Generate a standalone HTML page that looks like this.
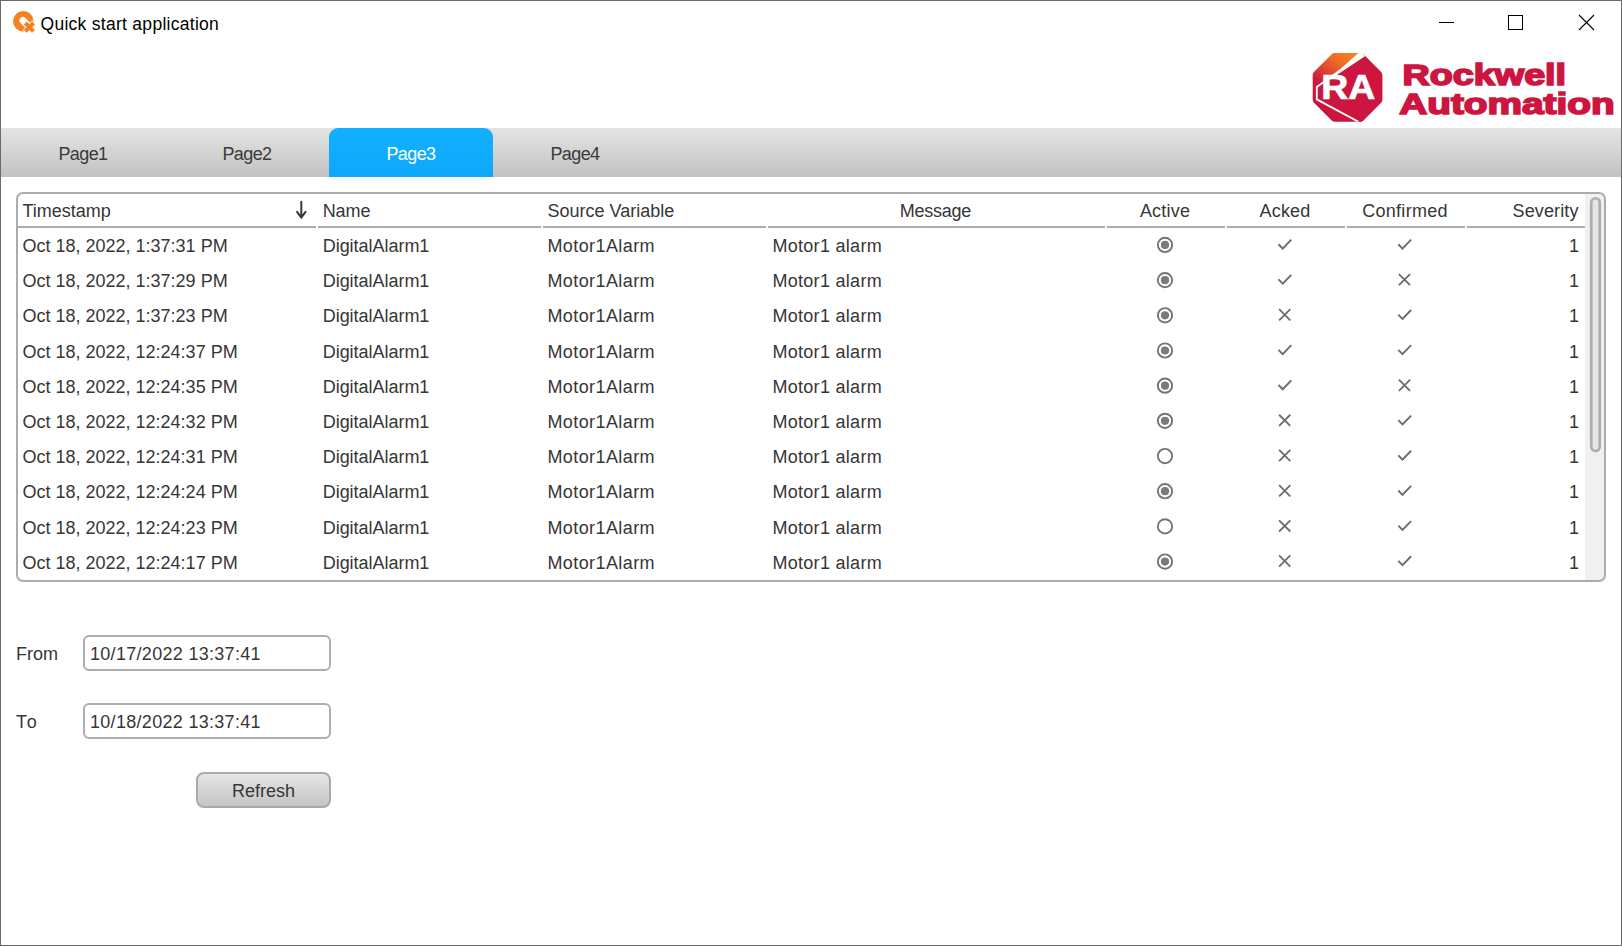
<!DOCTYPE html>
<html lang="en"><head><meta charset="utf-8"><title>Quick start application</title>
<style>
html,body{margin:0;padding:0}
body{width:1622px;height:946px;position:relative;overflow:hidden;background:#fff;font-family:"Liberation Sans",sans-serif;color:#363636;font-size:18px}
#winborder{position:absolute;left:0;top:0;width:1620px;height:944px;border:1px solid #6b6b6b;pointer-events:none}
#title{position:absolute;left:40.5px;top:13px;font-size:17.5px;letter-spacing:.28px;line-height:22px;color:#000;white-space:nowrap}
#appicon{position:absolute;left:0;top:0}
#winctl{position:absolute;left:1430px;top:5px}
#logo{position:absolute;left:1300px;top:44px}
#tabbar{position:absolute;left:1px;top:128px;width:1620px;height:49px;background:linear-gradient(#e4e4e4,#c2c2c2)}
.tab{position:absolute;top:0;height:49px;width:164px;text-align:center;line-height:52px;font-size:18px;color:#3a3a3a;letter-spacing:-.6px}
.tab.act{background:linear-gradient(#12b0ff,#0ea8fb);color:#fff;border-radius:9px 9px 0 0}
#table{position:absolute;left:0;top:0}
#tborder{position:absolute;left:16px;top:192px;width:1586px;height:386px;border:2px solid #acacac;border-radius:7px;pointer-events:none}
.h{position:absolute;top:200px;line-height:22px;white-space:nowrap}
.hc{text-align:center}
.hr{text-align:right}
.sep{position:absolute;top:226px;height:2px;background:#acacac}
#sortarrow{position:absolute;left:294px;top:199px}
.row{position:absolute;left:0;width:1600px;height:24px}
.c{position:absolute;top:0;line-height:24px;white-space:nowrap}
.c1{left:22.5px}.c2{left:322.7px;letter-spacing:-.03px}.c3{left:547.4px;letter-spacing:.42px}.c4{left:772.4px;letter-spacing:.3px}.c8{left:1467px;width:112px;text-align:right}
.ic{position:absolute}
#track{position:absolute;left:1585px;top:194px;width:19px;height:386px;background:#f0f0f0;border-radius:0 5px 5px 0}
#thumb{position:absolute;left:1588px;top:196px}
.lbl{position:absolute;line-height:24px;white-space:nowrap}
.inp{position:absolute;left:83px;width:244px;height:32px;border:2px solid #adadad;border-radius:6px;background:#fff}
.inp span{position:absolute;left:5px;top:5px;line-height:24px;white-space:nowrap;letter-spacing:.3px}
#btn{position:absolute;left:196px;top:772px;width:131px;height:32px;border:2px solid #aaa;border-radius:8px;background:linear-gradient(#e5e5e5,#c5c5c5);text-align:center}
#btn span{line-height:35px}

</style></head><body>
<svg id="appicon" width="40" height="40" viewBox="0 0 40 40"><circle cx="23.3" cy="21.2" r="10.3" fill="#f58220"/><path d="M23 20.5 L30 27.5" stroke="#fff" stroke-width="6.9" stroke-linecap="round" fill="none"/><path d="M24.7 22.5 L34.1 31.9 M34.1 22.5 L24.7 31.9" stroke="#fff" stroke-width="5.4" fill="none"/><path d="M25.26 23.06 L33.54 31.34 M33.54 23.06 L25.26 31.34" stroke="#f58220" stroke-width="4.1" fill="none"/></svg>
<div id="title">Quick start application</div>
<svg id="winctl" width="180" height="34" viewBox="0 0 180 34" shape-rendering="crispEdges"><path d="M9 17.5 H24" stroke="#000" stroke-width="1" fill="none"/><rect x="78.5" y="10.5" width="14" height="14" fill="none" stroke="#000" stroke-width="1"/><path d="M149 10 L164 25 M164 10 L149 25" stroke="#000" stroke-width="1.1" fill="none" shape-rendering="auto"/></svg>
<svg id="logo" width="322" height="84" viewBox="0 0 322 84">
<defs><linearGradient id="lg" gradientUnits="userSpaceOnUse" x1="56" y1="8" x2="22" y2="52"><stop offset="0" stop-color="#f6871f"/><stop offset="0.35" stop-color="#ee6a28"/><stop offset="0.85" stop-color="#cd163f"/><stop offset="1" stop-color="#cd163f"/></linearGradient>
<clipPath id="oct"><path d="M31.73 10.17 Q33 8.9 34.80 8.90 L60.20 8.90 Q62 8.9 63.27 10.17 L81.03 27.93 Q82.3 29.2 82.30 31.00 L82.30 55.70 Q82.3 57.5 81.03 58.77 L63.27 76.53 Q62 77.8 60.20 77.80 L34.80 77.80 Q33 77.8 31.73 76.53 L13.97 58.77 Q12.7 57.5 12.70 55.70 L12.70 31.00 Q12.7 29.2 13.97 27.93 Z"/></clipPath></defs>
<g clip-path="url(#oct)">
<rect x="10" y="6" width="76" height="76" fill="url(#lg)"/>
<path d="M63.5 9.5 L90 6 V84 H70 L57 77 L16.8 55.4 V42.9 Z" fill="#cd163f"/>
<path d="M62.6 10.2 L16.8 42.9 V55.4 L58.5 77.8" fill="none" stroke="#fff" stroke-width="1.8"/>
<path d="M59.6 8 L68 8 L64.6 12.4 L24 39.6 Z" fill="#fff"/>
</g>
<text x="21.2" y="55.2" font-family="Liberation Sans, sans-serif" font-weight="bold" font-size="34.5" fill="#fff" textLength="54" lengthAdjust="spacingAndGlyphs" stroke="#fff" stroke-width="0.7">RA</text>
<text x="102.6" y="40.5" font-family="Liberation Sans, sans-serif" font-weight="bold" font-size="30" fill="#cd163f" stroke="#cd163f" stroke-width="1.7" textLength="163.5" lengthAdjust="spacingAndGlyphs">Rockwell</text>
<text x="99.2" y="69.6" font-family="Liberation Sans, sans-serif" font-weight="bold" font-size="30" fill="#cd163f" stroke="#cd163f" stroke-width="1.7" textLength="215.5" lengthAdjust="spacingAndGlyphs">Automation</text>
</svg>
<div id="tabbar"><div class="tab" style="left:0">Page1</div><div class="tab" style="left:164px">Page2</div><div class="tab act" style="left:328px">Page3</div><div class="tab" style="left:492px">Page4</div></div>

<div id="table">
<div class="hdr">
<span class="h" style="left:22.5px">Timestamp</span>
<span class="h" style="left:322.7px;letter-spacing:-.1px">Name</span>
<span class="h" style="left:547.5px">Source Variable</span>
<span class="h hc" style="left:766px;width:339px;letter-spacing:-.25px">Message</span>
<span class="h hc" style="left:1105px;width:120px;letter-spacing:.2px">Active</span>
<span class="h hc" style="left:1225px;width:120px;letter-spacing:.2px">Acked</span>
<span class="h hc" style="left:1345px;width:120px;letter-spacing:.3px">Confirmed</span>
<span class="h hr" style="left:1466px;width:112.5px;letter-spacing:.12px">Severity</span>
</div>
<svg id="sortarrow" width="14" height="22" viewBox="0 0 14 22"><path d="M7.3 2.8 V18.4 M3.1 12.8 L7.3 18.7 L11.5 12.8" fill="none" stroke="#3a3a3a" stroke-width="2" stroke-linejoin="round" stroke-linecap="round"/></svg>
<div class="sep" style="left:18px;width:298px"></div>
<div class="sep" style="left:318px;width:223px"></div>
<div class="sep" style="left:543px;width:223px"></div>
<div class="sep" style="left:768px;width:337px"></div>
<div class="sep" style="left:1107px;width:118px"></div>
<div class="sep" style="left:1227px;width:118px"></div>
<div class="sep" style="left:1347px;width:118px"></div>
<div class="sep" style="left:1467px;width:118px"></div>
<div class="row" style="top:234px">
<span class="c c1">Oct 18, 2022, 1:37:31 PM</span><span class="c c2">DigitalAlarm1</span><span class="c c3">Motor1Alarm</span><span class="c c4">Motor1 alarm</span><span class="c c8">1</span>
</div>
<svg class="ic" style="left:1155px;top:234px" width="22" height="22" viewBox="0.00 -0.95 22 22"><circle cx="10" cy="10" r="7.15" fill="none" stroke="#747474" stroke-width="1.9"/><circle cx="10" cy="10" r="4.1" fill="#7a7a7a"/></svg>
<svg class="ic" style="left:1274px;top:234px" width="22" height="22" viewBox="-0.90 -0.95 22 22"><path d="M3.6 9.3 L7.8 13.6 L16.4 4.7" fill="none" stroke="#6c6c6c" stroke-width="1.9"/></svg>
<svg class="ic" style="left:1394px;top:234px" width="22" height="22" viewBox="-0.70 -0.95 22 22"><path d="M3.6 9.3 L7.8 13.6 L16.4 4.7" fill="none" stroke="#6c6c6c" stroke-width="1.9"/></svg>
<div class="row" style="top:269px">
<span class="c c1">Oct 18, 2022, 1:37:29 PM</span><span class="c c2">DigitalAlarm1</span><span class="c c3">Motor1Alarm</span><span class="c c4">Motor1 alarm</span><span class="c c8">1</span>
</div>
<svg class="ic" style="left:1155px;top:270px" width="22" height="22" viewBox="0.00 -0.13 22 22"><circle cx="10" cy="10" r="7.15" fill="none" stroke="#747474" stroke-width="1.9"/><circle cx="10" cy="10" r="4.1" fill="#7a7a7a"/></svg>
<svg class="ic" style="left:1274px;top:270px" width="22" height="22" viewBox="-0.90 -0.13 22 22"><path d="M3.6 9.3 L7.8 13.6 L16.4 4.7" fill="none" stroke="#6c6c6c" stroke-width="1.9"/></svg>
<svg class="ic" style="left:1394px;top:270px" width="22" height="22" viewBox="-0.70 -0.13 22 22"><path d="M4.2 3.9 L15.4 15.1 M15.4 3.9 L4.2 15.1" fill="none" stroke="#6c6c6c" stroke-width="1.8"/></svg>
<div class="row" style="top:304px">
<span class="c c1">Oct 18, 2022, 1:37:23 PM</span><span class="c c2">DigitalAlarm1</span><span class="c c3">Motor1Alarm</span><span class="c c4">Motor1 alarm</span><span class="c c8">1</span>
</div>
<svg class="ic" style="left:1155px;top:305px" width="22" height="22" viewBox="0.00 -0.31 22 22"><circle cx="10" cy="10" r="7.15" fill="none" stroke="#747474" stroke-width="1.9"/><circle cx="10" cy="10" r="4.1" fill="#7a7a7a"/></svg>
<svg class="ic" style="left:1274px;top:305px" width="22" height="22" viewBox="-0.90 -0.31 22 22"><path d="M4.2 3.9 L15.4 15.1 M15.4 3.9 L4.2 15.1" fill="none" stroke="#6c6c6c" stroke-width="1.8"/></svg>
<svg class="ic" style="left:1394px;top:305px" width="22" height="22" viewBox="-0.70 -0.31 22 22"><path d="M3.6 9.3 L7.8 13.6 L16.4 4.7" fill="none" stroke="#6c6c6c" stroke-width="1.9"/></svg>
<div class="row" style="top:340px">
<span class="c c1">Oct 18, 2022, 12:24:37 PM</span><span class="c c2">DigitalAlarm1</span><span class="c c3">Motor1Alarm</span><span class="c c4">Motor1 alarm</span><span class="c c8">1</span>
</div>
<svg class="ic" style="left:1155px;top:340px" width="22" height="22" viewBox="0.00 -0.49 22 22"><circle cx="10" cy="10" r="7.15" fill="none" stroke="#747474" stroke-width="1.9"/><circle cx="10" cy="10" r="4.1" fill="#7a7a7a"/></svg>
<svg class="ic" style="left:1274px;top:340px" width="22" height="22" viewBox="-0.90 -0.49 22 22"><path d="M3.6 9.3 L7.8 13.6 L16.4 4.7" fill="none" stroke="#6c6c6c" stroke-width="1.9"/></svg>
<svg class="ic" style="left:1394px;top:340px" width="22" height="22" viewBox="-0.70 -0.49 22 22"><path d="M3.6 9.3 L7.8 13.6 L16.4 4.7" fill="none" stroke="#6c6c6c" stroke-width="1.9"/></svg>
<div class="row" style="top:375px">
<span class="c c1">Oct 18, 2022, 12:24:35 PM</span><span class="c c2">DigitalAlarm1</span><span class="c c3">Motor1Alarm</span><span class="c c4">Motor1 alarm</span><span class="c c8">1</span>
</div>
<svg class="ic" style="left:1155px;top:375px" width="22" height="22" viewBox="0.00 -0.67 22 22"><circle cx="10" cy="10" r="7.15" fill="none" stroke="#747474" stroke-width="1.9"/><circle cx="10" cy="10" r="4.1" fill="#7a7a7a"/></svg>
<svg class="ic" style="left:1274px;top:375px" width="22" height="22" viewBox="-0.90 -0.67 22 22"><path d="M3.6 9.3 L7.8 13.6 L16.4 4.7" fill="none" stroke="#6c6c6c" stroke-width="1.9"/></svg>
<svg class="ic" style="left:1394px;top:375px" width="22" height="22" viewBox="-0.70 -0.67 22 22"><path d="M4.2 3.9 L15.4 15.1 M15.4 3.9 L4.2 15.1" fill="none" stroke="#6c6c6c" stroke-width="1.8"/></svg>
<div class="row" style="top:410px">
<span class="c c1">Oct 18, 2022, 12:24:32 PM</span><span class="c c2">DigitalAlarm1</span><span class="c c3">Motor1Alarm</span><span class="c c4">Motor1 alarm</span><span class="c c8">1</span>
</div>
<svg class="ic" style="left:1155px;top:410px" width="22" height="22" viewBox="0.00 -0.85 22 22"><circle cx="10" cy="10" r="7.15" fill="none" stroke="#747474" stroke-width="1.9"/><circle cx="10" cy="10" r="4.1" fill="#7a7a7a"/></svg>
<svg class="ic" style="left:1274px;top:410px" width="22" height="22" viewBox="-0.90 -0.85 22 22"><path d="M4.2 3.9 L15.4 15.1 M15.4 3.9 L4.2 15.1" fill="none" stroke="#6c6c6c" stroke-width="1.8"/></svg>
<svg class="ic" style="left:1394px;top:410px" width="22" height="22" viewBox="-0.70 -0.85 22 22"><path d="M3.6 9.3 L7.8 13.6 L16.4 4.7" fill="none" stroke="#6c6c6c" stroke-width="1.9"/></svg>
<div class="row" style="top:445px">
<span class="c c1">Oct 18, 2022, 12:24:31 PM</span><span class="c c2">DigitalAlarm1</span><span class="c c3">Motor1Alarm</span><span class="c c4">Motor1 alarm</span><span class="c c8">1</span>
</div>
<svg class="ic" style="left:1155px;top:446px" width="22" height="22" viewBox="0.00 -0.03 22 22"><circle cx="10" cy="10" r="7.15" fill="none" stroke="#747474" stroke-width="1.9"/></svg>
<svg class="ic" style="left:1274px;top:446px" width="22" height="22" viewBox="-0.90 -0.03 22 22"><path d="M4.2 3.9 L15.4 15.1 M15.4 3.9 L4.2 15.1" fill="none" stroke="#6c6c6c" stroke-width="1.8"/></svg>
<svg class="ic" style="left:1394px;top:446px" width="22" height="22" viewBox="-0.70 -0.03 22 22"><path d="M3.6 9.3 L7.8 13.6 L16.4 4.7" fill="none" stroke="#6c6c6c" stroke-width="1.9"/></svg>
<div class="row" style="top:480px">
<span class="c c1">Oct 18, 2022, 12:24:24 PM</span><span class="c c2">DigitalAlarm1</span><span class="c c3">Motor1Alarm</span><span class="c c4">Motor1 alarm</span><span class="c c8">1</span>
</div>
<svg class="ic" style="left:1155px;top:481px" width="22" height="22" viewBox="0.00 -0.21 22 22"><circle cx="10" cy="10" r="7.15" fill="none" stroke="#747474" stroke-width="1.9"/><circle cx="10" cy="10" r="4.1" fill="#7a7a7a"/></svg>
<svg class="ic" style="left:1274px;top:481px" width="22" height="22" viewBox="-0.90 -0.21 22 22"><path d="M4.2 3.9 L15.4 15.1 M15.4 3.9 L4.2 15.1" fill="none" stroke="#6c6c6c" stroke-width="1.8"/></svg>
<svg class="ic" style="left:1394px;top:481px" width="22" height="22" viewBox="-0.70 -0.21 22 22"><path d="M3.6 9.3 L7.8 13.6 L16.4 4.7" fill="none" stroke="#6c6c6c" stroke-width="1.9"/></svg>
<div class="row" style="top:516px">
<span class="c c1">Oct 18, 2022, 12:24:23 PM</span><span class="c c2">DigitalAlarm1</span><span class="c c3">Motor1Alarm</span><span class="c c4">Motor1 alarm</span><span class="c c8">1</span>
</div>
<svg class="ic" style="left:1155px;top:516px" width="22" height="22" viewBox="0.00 -0.39 22 22"><circle cx="10" cy="10" r="7.15" fill="none" stroke="#747474" stroke-width="1.9"/></svg>
<svg class="ic" style="left:1274px;top:516px" width="22" height="22" viewBox="-0.90 -0.39 22 22"><path d="M4.2 3.9 L15.4 15.1 M15.4 3.9 L4.2 15.1" fill="none" stroke="#6c6c6c" stroke-width="1.8"/></svg>
<svg class="ic" style="left:1394px;top:516px" width="22" height="22" viewBox="-0.70 -0.39 22 22"><path d="M3.6 9.3 L7.8 13.6 L16.4 4.7" fill="none" stroke="#6c6c6c" stroke-width="1.9"/></svg>
<div class="row" style="top:551px">
<span class="c c1">Oct 18, 2022, 12:24:17 PM</span><span class="c c2">DigitalAlarm1</span><span class="c c3">Motor1Alarm</span><span class="c c4">Motor1 alarm</span><span class="c c8">1</span>
</div>
<svg class="ic" style="left:1155px;top:551px" width="22" height="22" viewBox="0.00 -0.57 22 22"><circle cx="10" cy="10" r="7.15" fill="none" stroke="#747474" stroke-width="1.9"/><circle cx="10" cy="10" r="4.1" fill="#7a7a7a"/></svg>
<svg class="ic" style="left:1274px;top:551px" width="22" height="22" viewBox="-0.90 -0.57 22 22"><path d="M4.2 3.9 L15.4 15.1 M15.4 3.9 L4.2 15.1" fill="none" stroke="#6c6c6c" stroke-width="1.8"/></svg>
<svg class="ic" style="left:1394px;top:551px" width="22" height="22" viewBox="-0.70 -0.57 22 22"><path d="M3.6 9.3 L7.8 13.6 L16.4 4.7" fill="none" stroke="#6c6c6c" stroke-width="1.9"/></svg>
<div id="track"></div><svg id="thumb" width="16" height="262" viewBox="0 0 16 262"><rect x="3.25" y="2.25" width="8.5" height="252.7" rx="4.25" fill="#e6e6e6" stroke="#aeaeae" stroke-width="2.7"/></svg>
<div id="tborder"></div>
</div>
<div class="lbl" style="left:16px;top:642px">From</div>
<div class="inp" style="top:635px"><span>10/17/2022 13:37:41</span></div>
<div class="lbl" style="left:16px;top:710px;letter-spacing:1.8px">To</div>
<div class="inp" style="top:703px"><span>10/18/2022 13:37:41</span></div>
<div id="btn"><span>Refresh</span></div>
<div id="winborder"></div>
</body></html>
